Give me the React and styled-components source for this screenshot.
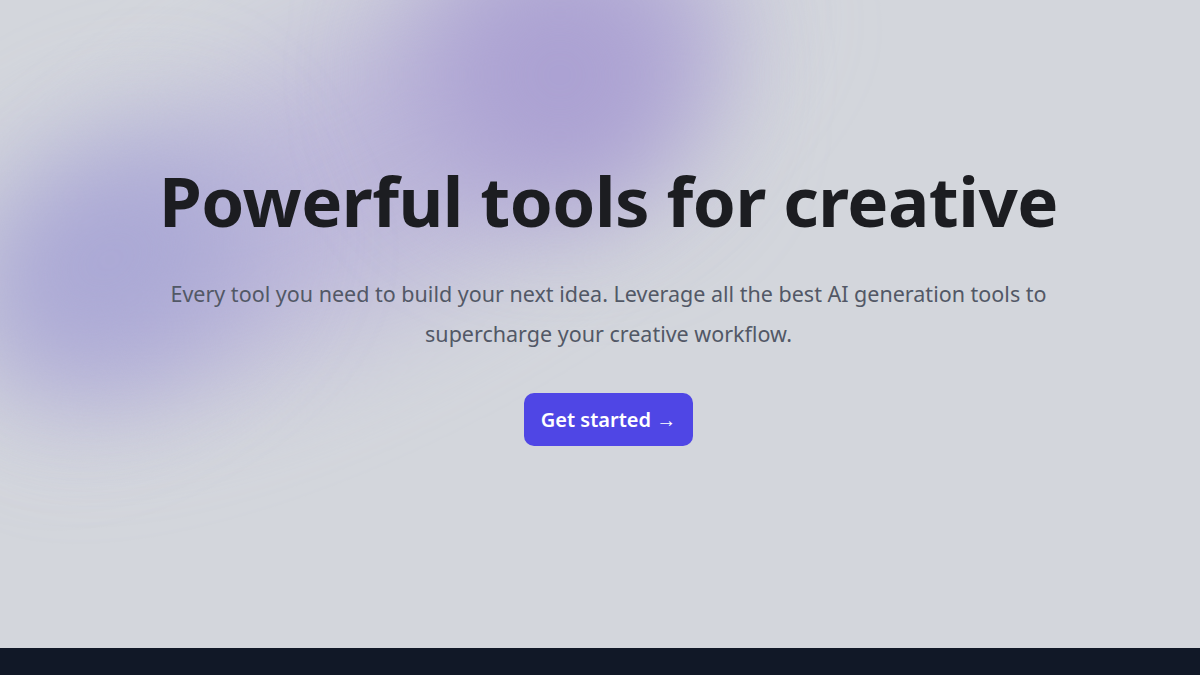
import React from 'react';
import styled, { createGlobalStyle } from 'styled-components';

const GlobalStyle = createGlobalStyle`
  html, body {
    margin: 0;
    padding: 0;
    background: #111827;
  }
  body {
    font-family: "Noto Sans", "Open Sans", "Liberation Sans", sans-serif;
  }
`;

const Hero = styled.section`
  position: relative;
  overflow: hidden;
  height: 648px;
  background: #d3d6dc;
  display: flex;
  flex-direction: column;
  align-items: center;
  padding: 160px 0 0 17px;
  box-sizing: border-box;
`;

// soft decorative glow sitting behind the hero copy
const Blob = styled.div`
  position: absolute;
  border-radius: 50%;
  background: ${(p) => p.$color};
  filter: blur(${(p) => p.$blur}px);
  pointer-events: none;
`;

const Content = styled.div`
  position: relative;
  display: flex;
  flex-direction: column;
  align-items: center;
  text-align: center;
`;

const Title = styled.h1`
  margin: 0;
  font-size: 69px;
  line-height: 80px;
  font-weight: 700;
  letter-spacing: -0.5px;
  color: #1c1d21;
`;

const Lead = styled.p`
  margin: 34px 0 0;
  max-width: 920px;
  font-size: 21.5px;
  line-height: 40px;
  color: #525866;
`;

const Button = styled.a`
  margin-top: 39px;
  display: inline-flex;
  align-items: center;
  justify-content: center;
  width: 169px;
  height: 53px;
  box-sizing: border-box;
  border-radius: 10px;
  background: #4f46e5;
  color: #fff;
  font-size: 20px;
  font-weight: 600;
  text-decoration: none;
  cursor: pointer;
`;

const Footer = styled.footer`
  height: 27px;
  background: #111827;
`;

export default function App() {
  return (
    <>
      <GlobalStyle />
      <Hero>
        <Blob $color="#bdb8da" $blur={60} style={{ left: -40, top: 40, width: 820, height: 260, transform: 'rotate(-28deg)' }} />
        <Blob $color="#aaa8d5" $blur={60} style={{ left: -40, top: 150, width: 300, height: 220, transform: 'rotate(-30deg)' }} />
        <Blob $color="#aba1d2" $blur={60} style={{ left: 420, top: -60, width: 280, height: 270 }} />
        <Content>
          <Title>Powerful tools for creative</Title>
          <Lead>
            Every tool you need to build your next idea. Leverage all the best AI generation tools to supercharge your creative workflow.
          </Lead>
          <Button>Get started →</Button>
        </Content>
      </Hero>
      <Footer />
    </>
  );
}
